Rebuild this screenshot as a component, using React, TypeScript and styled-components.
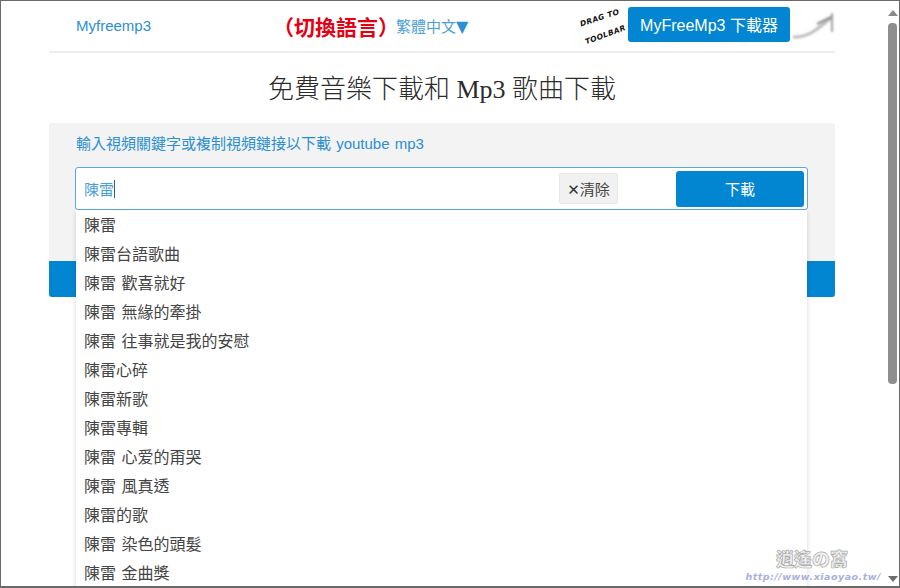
import styled, { createGlobalStyle } from 'styled-components';

const suggestions = [
  '陳雷',
  '陳雷台語歌曲',
  '陳雷 歡喜就好',
  '陳雷 無緣的牽掛',
  '陳雷 往事就是我的安慰',
  '陳雷心碎',
  '陳雷新歌',
  '陳雷專輯',
  '陳雷 心爱的甭哭',
  '陳雷 風真透',
  '陳雷的歌',
  '陳雷 染色的頭髮',
  '陳雷 金曲獎',
];

const sans = `"Liberation Sans", "Noto Sans CJK TC", sans-serif`;
const blue = '#0286d2';

const GlobalStyle = createGlobalStyle`
  html, body {
    margin: 0;
    height: 100%;
    overflow: hidden;
    background: #fff;
  }
  * {
    box-sizing: border-box;
  }
`;

const Frame = styled.div`
  position: relative;
  width: 900px;
  height: 588px;
  display: flex;
  overflow: hidden;
  background: #fff;
  border-top: 1px solid #6a6a6a;
  border-left: 1px solid #6a6a6a;
  border-right: 1px solid #6a6a6a;
  border-bottom: 2px solid #6a6a6a;
  font-family: ${sans};
`;

const Main = styled.main`
  width: 882px;
  padding: 0 48px;
  overflow: hidden;
`;

const Header = styled.header`
  height: 52px;
  display: flex;
  align-items: center;
  padding: 0 0 2px 27px;
  border-bottom: 2px solid #eeeeee;
`;

const Logo = styled.a`
  width: 209px;
  font-size: 15px;
  color: #2a8fd4;
`;

const LangHint = styled.span`
  font-size: 21px;
  font-weight: 700;
  color: #e60012;
  margin: 2px -3px 0 -12px;
`;

const LangLink = styled.a`
  font-size: 15px;
  color: #4b9fd8;
`;

const LangArrow = styled.span`
  font-family: "DejaVu Sans", sans-serif;
  font-size: 16px;
  color: #2a8fd4;
`;

const ToolbarGroup = styled.div`
  margin-left: auto;
  display: flex;
  align-items: center;
  padding-bottom: 2px;
`;

const DragHint = styled.div`
  width: 49px;
  display: flex;
  flex-direction: column;
  gap: 9px;
  padding-top: 2px;
  font-family: "DejaVu Sans", sans-serif;
  font-size: 7.5px;
  font-weight: 700;
  font-style: italic;
  letter-spacing: 0.4px;
  color: #111;
`;

const DragWord = styled.span<{ $indent: number; $tilt: number }>`
  display: block;
  white-space: nowrap;
  margin-left: ${(p) => p.$indent}px;
  transform: rotate(${(p) => p.$tilt}deg);
`;

const ToolbarButton = styled.a`
  width: 162px;
  height: 35px;
  display: flex;
  align-items: center;
  justify-content: center;
  border-radius: 3px;
  background: ${blue};
  color: #fff;
  font-size: 16px;
`;

const Title = styled.h1`
  height: 70px;
  margin: 0;
  padding-top: 19px;
  text-align: center;
  font-family: "Liberation Serif", "Noto Sans CJK TC", serif;
  font-size: 26px;
  line-height: 36px;
  font-weight: 300;
  color: #2b2b2b;
`;

const Panel = styled.section`
  height: 174px;
  display: flex;
  flex-direction: column;
  padding: 0 27px 0 26px;
  border-radius: 3px;
  background: #f3f3f3;
  position: relative;
`;

const Prompt = styled.label`
  height: 44px;
  padding-left: 1px;
  line-height: 42px;
  font-size: 15px;
  word-spacing: 1px;
  color: #2a8fd4;
`;

const SearchBox = styled.div`
  position: relative;
  z-index: 2;
  height: 43px;
  display: flex;
  align-items: center;
  padding: 0 3px 0 8px;
  border: 1px solid #5aa8dc;
  border-radius: 3px;
  background: #fff;
`;

const Query = styled.div`
  flex: 1;
  display: flex;
  align-items: center;
  font-size: 15px;
  color: #4b9fd8;
`;

const Caret = styled.span`
  width: 1px;
  height: 18px;
  background: #2f5f86;
`;

const ClearButton = styled.button`
  width: 59px;
  height: 31px;
  padding: 0;
  margin-right: 58px;
  border: 1px solid #e8e8e8;
  border-radius: 2px;
  background: #f1f1f1;
  font-family: ${sans};
  font-size: 15px;
  color: #444;
`;

const ClearMark = styled.span`
  font-family: "DejaVu Sans", sans-serif;
  font-size: 15px;
  line-height: 1;
  font-weight: 700;
  color: #333;
`;

const DownloadButton = styled.button`
  width: 128px;
  height: 36px;
  padding: 0;
  border: none;
  border-radius: 3px;
  background: ${blue};
  font-family: ${sans};
  font-size: 15px;
  color: #fff;
`;

const Suggestions = styled.ul`
  position: absolute;
  top: calc(100% + 1px);
  left: 0;
  right: 0;
  margin: 0;
  padding: 1px 0 0;
  list-style: none;
  background: #fff;
  box-shadow: 0 2px 5px rgba(0, 0, 0, 0.16);
`;

const Suggestion = styled.li`
  height: 29px;
  padding-left: 8px;
  font-size: 16px;
  line-height: 29px;
  word-spacing: 1px;
  color: #444;
`;

const ResultBar = styled.div`
  position: absolute;
  left: 0;
  right: 0;
  bottom: 0;
  height: 36px;
  border-radius: 0 0 3px 3px;
  background: ${blue};
`;

const Scrollbar = styled.div`
  flex: 1;
  display: flex;
  flex-direction: column;
  align-items: center;
  padding: 9px 0 4px 3px;
`;

const Arrow = styled.div<{ $up?: boolean }>`
  width: 0;
  height: 0;
  border-left: 5px solid transparent;
  border-right: 5px solid transparent;
  ${(p) =>
    p.$up
      ? 'border-bottom: 6px solid #8a8a8a;'
      : 'border-top: 6px solid #6f6f6f;'}
`;

const Thumb = styled.div`
  width: 9px;
  height: 361px;
  margin-top: 7px;
  margin-bottom: auto;
  border-radius: 4px;
  background: #8e8e8e;
`;

const Watermark = styled.div`
  position: absolute;
  z-index: 3;
  right: 18px;
  bottom: 3px;
  display: flex;
  flex-direction: column;
  align-items: flex-end;
  pointer-events: none;
`;

const WatermarkName = styled.span`
  margin-right: 33px;
  font-family: "Noto Sans CJK TC", sans-serif;
  font-size: 18px;
  line-height: 24px;
  font-weight: 900;
  color: #f2f2f2;
  -webkit-text-stroke: 0.7px #a9a9a9;
`;

const WatermarkUrl = styled.span`
  font-family: "DejaVu Sans", sans-serif;
  font-size: 9.5px;
  line-height: 13px;
  font-weight: 700;
  font-style: italic;
  letter-spacing: 0.5px;
  color: #a8b0de;
`;

const ArrowSvg = styled.svg`
  display: block;
  margin-left: 1px;
  filter: blur(0.8px);
`;

function ArrowSketch() {
  return (
    <ArrowSvg width="44" height="40" viewBox="0 0 44 40">
      <path d="M2 33 C16 34 26 26 41 13" fill="none" stroke="#bdbdbd" strokeWidth="3" />
      <path d="M26 20 L40 13" fill="none" stroke="#8c8c8c" strokeWidth="2" />
      <path d="M41 9 L41 28" fill="none" stroke="#a0a0a0" strokeWidth="2" />
    </ArrowSvg>
  );
}

export default function App() {
  return (
    <>
      <GlobalStyle />
      <Frame>
        <Main>
          <Header>
            <Logo>Myfreemp3</Logo>
            <LangHint>（切換語言）</LangHint>
            <LangLink>
              繁體中文<LangArrow>▼</LangArrow>
            </LangLink>
            <ToolbarGroup>
              <DragHint>
                <DragWord $indent={0} $tilt={-18}>DRAG TO</DragWord>
                <DragWord $indent={5} $tilt={-20}>TOOLBAR</DragWord>
              </DragHint>
              <ToolbarButton>MyFreeMp3 下載器</ToolbarButton>
              <ArrowSketch />
            </ToolbarGroup>
          </Header>
          <Title>免費音樂下載和 Mp3 歌曲下載</Title>
          <Panel>
            <Prompt>輸入視頻關鍵字或複制視頻鏈接以下載 youtube mp3</Prompt>
            <SearchBox>
              <Query>
                陳雷
                <Caret />
              </Query>
              <ClearButton>
                <ClearMark>✕</ClearMark>清除
              </ClearButton>
              <DownloadButton>下載</DownloadButton>
              <Suggestions>
                {suggestions.map((item) => (
                  <Suggestion key={item}>{item}</Suggestion>
                ))}
              </Suggestions>
            </SearchBox>
            <ResultBar />
          </Panel>
        </Main>
        <Scrollbar>
          <Arrow $up />
          <Thumb />
          <Arrow />
        </Scrollbar>
        <Watermark>
          <WatermarkName>逍遙の窩</WatermarkName>
          <WatermarkUrl>http://www.xiaoyao.tw/</WatermarkUrl>
        </Watermark>
      </Frame>
    </>
  );
}
